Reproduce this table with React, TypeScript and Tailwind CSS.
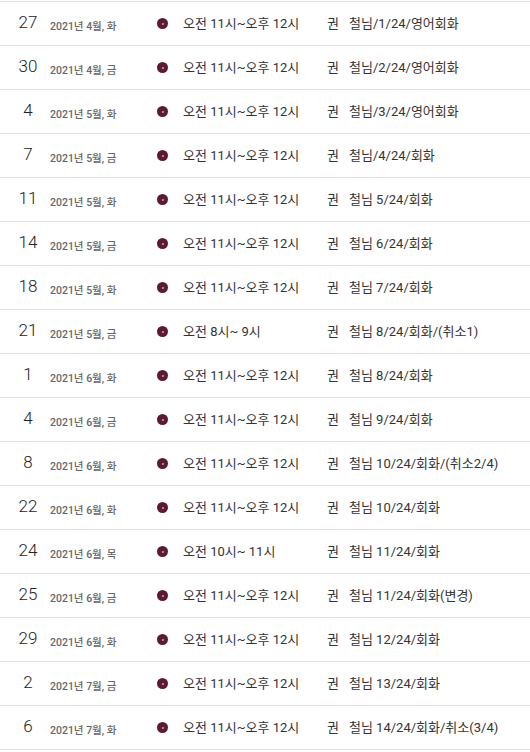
const rows = [
  { d: '27', date: '2021년 4월, 화', time: '오전 11시~오후 12시', note: '철님/1/24/영어회화' },
  { d: '30', date: '2021년 4월, 금', time: '오전 11시~오후 12시', note: '철님/2/24/영어회화' },
  { d: '4', date: '2021년 5월, 화', time: '오전 11시~오후 12시', note: '철님/3/24/영어회화' },
  { d: '7', date: '2021년 5월, 금', time: '오전 11시~오후 12시', note: '철님/4/24/회화' },
  { d: '11', date: '2021년 5월, 화', time: '오전 11시~오후 12시', note: '철님 5/24/회화' },
  { d: '14', date: '2021년 5월, 금', time: '오전 11시~오후 12시', note: '철님 6/24/회화' },
  { d: '18', date: '2021년 5월, 화', time: '오전 11시~오후 12시', note: '철님 7/24/회화' },
  { d: '21', date: '2021년 5월, 금', time: '오전 8시~ 9시', note: '철님 8/24/회화/(취소1)' },
  { d: '1', date: '2021년 6월, 화', time: '오전 11시~오후 12시', note: '철님 8/24/회화' },
  { d: '4', date: '2021년 6월, 금', time: '오전 11시~오후 12시', note: '철님 9/24/회화' },
  { d: '8', date: '2021년 6월, 화', time: '오전 11시~오후 12시', note: '철님 10/24/회화/(취소2/4)' },
  { d: '22', date: '2021년 6월, 화', time: '오전 11시~오후 12시', note: '철님 10/24/회화' },
  { d: '24', date: '2021년 6월, 목', time: '오전 10시~ 11시', note: '철님 11/24/회화' },
  { d: '25', date: '2021년 6월, 금', time: '오전 11시~오후 12시', note: '철님 11/24/회화(변경)' },
  { d: '29', date: '2021년 6월, 화', time: '오전 11시~오후 12시', note: '철님 12/24/회화' },
  { d: '2', date: '2021년 7월, 금', time: '오전 11시~오후 12시', note: '철님 13/24/회화' },
  { d: '6', date: '2021년 7월, 화', time: '오전 11시~오후 12시', note: '철님 14/24/회화/취소(3/4)' },
];

export default function App() {
  return (
    <div
      className="w-[530px] h-[752px] overflow-hidden bg-white text-[#333]"
      style={{ fontFamily: 'Roboto, "Noto Sans CJK KR", sans-serif' }}
    >
      <div className="mt-px border-t border-[#e0e0e0]">
        {rows.map((r, i) => (
          <div key={i} className="h-[44px] flex items-center border-b border-[#e0e0e0]">
            {/* 날짜 */}
            <div className="w-[56px] text-center text-[17px] font-light leading-none text-[#222] -mt-[2px]">{r.d}</div>
            <div className="w-[100px] -ml-[6px] mt-[8px] text-[10.5px] font-medium leading-none text-[#666]">
              {r.date}
            </div>
            {/* 점 */}
            <div className="ml-[7px] w-[11px] h-[11px] rounded-full bg-[#5c1a2f] flex items-center justify-center">
              <div className="w-[2px] h-[2px] rounded-full bg-[#d9a0b0]" />
            </div>
            <div className="ml-[15px] w-[144px] text-[13px] leading-none text-[#333]">{r.time}</div>
            <div className="text-[13px] leading-none text-[#333]">
              권<span className="inline-block w-[10px]" />
              {r.note}
            </div>
          </div>
        ))}
      </div>
    </div>
  );
}
